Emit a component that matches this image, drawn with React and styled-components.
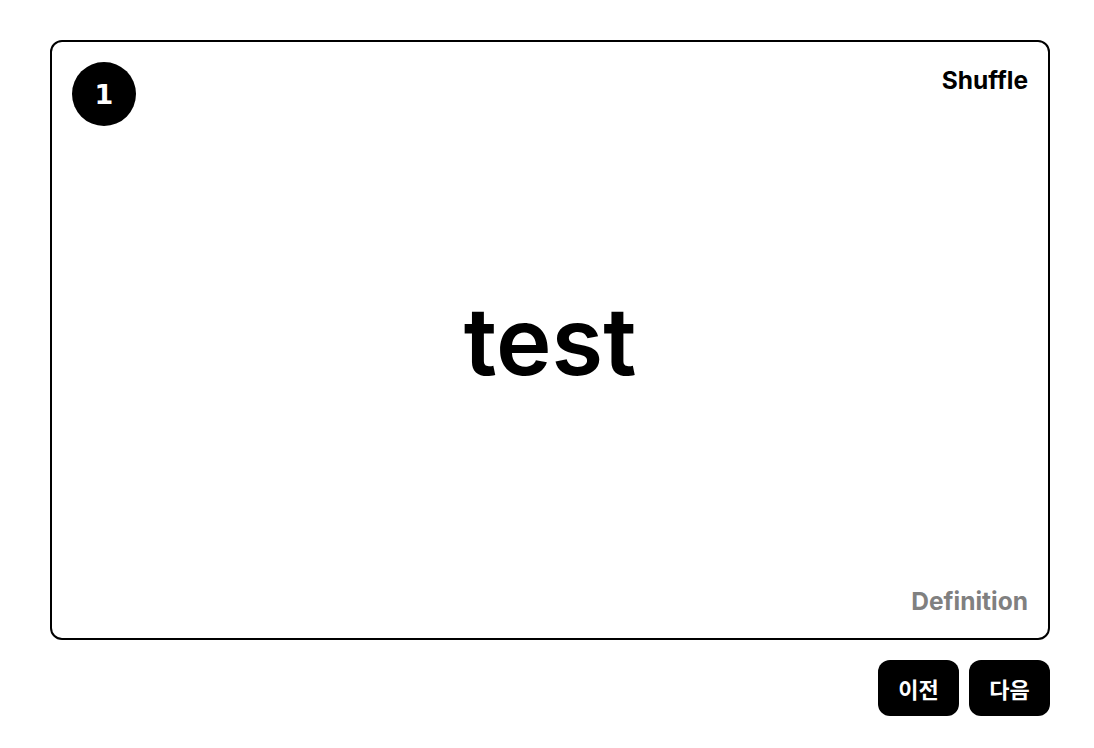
import React, { useState } from "react"
import styled, { createGlobalStyle } from "styled-components"

const GlobalStyle = createGlobalStyle`
  body {
    margin: 0;
    background: #fff;
    font-family: Inter, "Noto Sans CJK KR", sans-serif;
  }
`

const words = [{ term: "test", definition: "test definition" }]

const App = () => {
  const [index, setIndex] = useState(0)
  const [flipped, setFlipped] = useState(false)
  const card = words[index]

  return (
    <Page>
      <GlobalStyle />
      <Card onClick={() => setFlipped(!flipped)}>
        <CardTop>
          <Badge>{index + 1}</Badge>
          <ShuffleButton onClick={(e) => e.stopPropagation()}>Shuffle</ShuffleButton>
        </CardTop>
        <Term>{flipped ? card.definition : card.term}</Term>
        <CardBottom>
          <SideLabel>{flipped ? "Term" : "Definition"}</SideLabel>
        </CardBottom>
      </Card>
      <Controls>
        <NavButton onClick={() => setIndex(Math.max(0, index - 1))}>이전</NavButton>
        <NavButton onClick={() => setIndex(Math.min(words.length - 1, index + 1))}>
          다음
        </NavButton>
      </Controls>
    </Page>
  )
}

const Page = styled.div`
  padding: 40px 50px;
  width: 1000px;
  display: flex;
  flex-direction: column;
  gap: 20px;
`

const Card = styled.div`
  box-sizing: border-box;
  width: 1000px;
  height: 600px;
  border: 2px solid #000;
  border-radius: 12px;
  padding: 20px 20px 22px;
  display: flex;
  flex-direction: column;
  cursor: pointer;
`

const CardTop = styled.div`
  display: flex;
  justify-content: space-between;
  align-items: flex-start;
`

const Badge = styled.div`
  width: 64px;
  height: 64px;
  border-radius: 50%;
  background: #000;
  color: #fff;
  display: flex;
  align-items: center;
  justify-content: center;
  font-family: "DejaVu Sans", sans-serif;
  font-weight: bold;
  font-size: 27px;
`

const ShuffleButton = styled.button`
  background: none;
  border: none;
  padding: 0;
  margin-top: 3px;
  font-family: Inter, sans-serif;
  font-weight: 700;
  font-size: 24.5px;
  color: #000;
  cursor: pointer;
`

const Term = styled.div`
  flex: 1;
  display: flex;
  align-items: center;
  justify-content: center;
  font-family: Inter, sans-serif;
  font-weight: 600;
  font-size: 94px;
  color: #000;
  padding-bottom: 30px;
`

const CardBottom = styled.div`
  display: flex;
  justify-content: flex-end;
`

const SideLabel = styled.span`
  font-family: Inter, sans-serif;
  font-weight: 700;
  font-size: 24.5px;
  color: #808080;
`

const Controls = styled.div`
  display: flex;
  justify-content: flex-end;
  gap: 10px;
`

const NavButton = styled.button`
  width: 81px;
  height: 56px;
  border: none;
  border-radius: 12px;
  background: #000;
  color: #fff;
  font-family: "Noto Sans CJK KR", sans-serif;
  font-weight: 700;
  font-size: 22px;
  cursor: pointer;
`

export default App
